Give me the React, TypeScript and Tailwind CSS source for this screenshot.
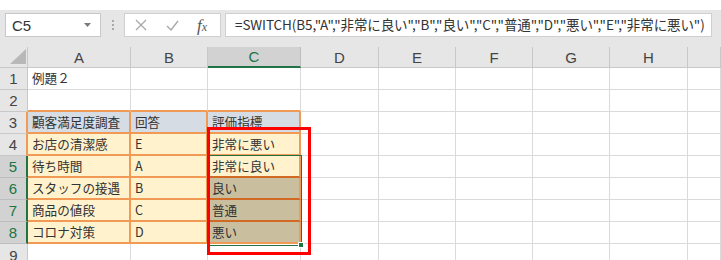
import React from "react";

const GRID = "grid grid-cols-[28px_103px_77px_93px_78px_77px_77px_77px_78px_1fr] grid-rows-[100%] overflow-hidden";

type Row = { n: number; cells: [string, string, string] };

const rows: Row[] = [
  { n: 1, cells: ["例題２", "", ""] },
  { n: 2, cells: ["", "", ""] },
  { n: 3, cells: ["顧客満足度調査", "回答", "評価指標"] },
  { n: 4, cells: ["お店の清潔感", "E", "非常に悪い"] },
  { n: 5, cells: ["待ち時間", "A", "非常に良い"] },
  { n: 6, cells: ["スタッフの接遇", "B", "良い"] },
  { n: 7, cells: ["商品の値段", "C", "普通"] },
  { n: 8, cells: ["コロナ対策", "D", "悪い"] },
];

const jp = { fontFamily: '"Noto Sans CJK JP", "Noto Sans", sans-serif' };
const lat = { fontFamily: '"Liberation Sans", Arial, sans-serif' };

function rowHeaderClass(n: number) {
  if (n === 3 || n === 4) return "bg-[#e6e6e6] text-[#444] border-r-2 border-r-[#f19a55] border-b border-b-[#c8c8c8]";
  if (n >= 5 && n <= 8) return "bg-[#d2d2d2] text-[#217346] border-r-2 border-r-[#217346] border-b border-b-[#bdbdbd]";
  return "bg-[#e6e6e6] text-[#444] border-r border-r-[#c8c8c8] border-b border-b-[#c8c8c8]";
}

function cellClass(n: number, c: number) {
  if (n === 2) return "bg-white border-r border-r-[#dadada] border-b-2 border-b-[#f19a55]";
  if (n === 3) return "bg-[#d6dce4] border-r-2 border-r-[#f19a55] border-b-2 border-b-[#f19a55]";
  if (n >= 4) {
    if (c === 2 && n >= 6) {
      if (n === 8) return "bg-[#c9bf9e] border-r-2 border-r-[#f19a55] border-b-2 border-b-[#f19a55]";
      return "bg-[#c9bf9e] border-r-2 border-r-[#f19a55] border-b-2 border-b-[#d06a24]";
    }
    if (c === 2 && n === 5) return "bg-[#fff2cc] border-r-2 border-r-[#f19a55] border-b-2 border-b-[#d06a24]";
    return "bg-[#fff2cc] border-r-2 border-r-[#f19a55] border-b-2 border-b-[#f19a55]";
  }
  return "bg-white border-r border-r-[#dadada] border-b border-b-[#dadada]";
}

const blank = "bg-white border-r border-r-[#dadada] border-b border-b-[#dadada]";

export default function App() {
  return (
    <div className="w-[721px] h-[260px] overflow-hidden bg-white relative select-none">
      <div className="h-[10px] bg-white" />
      <div className="h-[37px] bg-[#e6e6e6] flex items-start pt-[3px]">
        <div className="ml-[5px] w-[96px] h-[24px] bg-white border border-[#c8c8c8] flex items-center justify-between pl-[6px] pr-[9px]">
          <span className="text-[15px] leading-none text-[#333]" style={lat}>C5</span>
          <svg width="7" height="4" viewBox="0 0 7 4"><polygon points="0,0 7,0 3.5,4" fill="#7a7a7a" /></svg>
        </div>
        <div className="w-[23px] h-[24px] flex flex-col items-center justify-center gap-[2px]">
          <div className="w-[2px] h-[2px] bg-[#a8a8a8]" />
          <div className="w-[2px] h-[2px] bg-[#a8a8a8]" />
          <div className="w-[2px] h-[2px] bg-[#a8a8a8]" />
        </div>
        <div className="w-[97px] h-[24px] bg-white border border-[#d0d0d0] flex items-center">
          <svg className="ml-[10px]" width="12" height="12" viewBox="0 0 12 12">
            <path d="M1 1 L11 11 M11 1 L1 11" stroke="#a9a9a9" strokeWidth="1.3" fill="none" />
          </svg>
          <svg className="ml-[19px]" width="13" height="11" viewBox="0 0 13 11">
            <path d="M1 6 L5 10 L12 1" stroke="#a9a9a9" strokeWidth="1.4" fill="none" />
          </svg>
          <span className="ml-[18px] text-[17px] italic text-[#555] leading-none" style={{ fontFamily: '"Liberation Serif", serif' }}>
            f<span className="text-[12px]">x</span>
          </span>
        </div>
        <div className="ml-[4px] w-[487px] h-[24px] bg-white border border-[#d0d0d0] flex items-center pl-[9px]">
          <span className="text-[13.5px] leading-none text-[#333] whitespace-nowrap tracking-[-0.1px]" style={jp}>
            =SWITCH(B5,"A","非常に良い","B","良い","C","普通","D","悪い","E","非常に悪い")
          </span>
        </div>
      </div>

      <div className="relative">
        <div className={`${GRID} h-[21px]`}>
          <div className="bg-[#e6e6e6] border-r border-r-[#c8c8c8] border-b border-b-[#c8c8c8] relative">
            <svg className="absolute left-0 top-0" width="28" height="21" viewBox="0 0 28 21">
              <polygon points="26,2 26,17 10,17" fill="#b8b8b8" />
            </svg>
          </div>
          {["A", "B", "C", "D", "E", "F", "G", "H", ""].map((l, i) => (
            <div
              key={i}
              className={
                l === "C"
                  ? "bg-[#d2d2d2] border-r border-r-[#bdbdbd] border-b-2 border-b-[#217346] flex items-center justify-center text-[15px] leading-none text-[#217346]"
                  : "bg-[#e6e6e6] border-r border-r-[#c8c8c8] border-b border-b-[#c8c8c8] flex items-center justify-center text-[15px] leading-none text-[#444]"
              }
              style={lat}
            >
              {l}
            </div>
          ))}
        </div>

        {rows.map((r) => (
          <div key={r.n} className={`${GRID} h-[22px]`}>
            <div className={`${rowHeaderClass(r.n)} flex items-center justify-center text-[15px] leading-none`} style={lat}>
              {r.n}
            </div>
            {r.cells.map((t, c) => (
              <div
                key={c}
                className={`${cellClass(r.n, c)} flex items-center pl-[4px] text-[12.6px] leading-none text-[#333] whitespace-nowrap overflow-hidden`}
                style={jp}
              >
                {t}
              </div>
            ))}
            {[0, 1, 2, 3, 4, 5].map((k) => (
              <div key={k} className={blank} />
            ))}
          </div>
        ))}

        <div className={`${GRID} h-[22px]`}>
          <div className="bg-[#e6e6e6] border-r border-r-[#c8c8c8] flex items-center justify-center text-[15px] leading-none text-[#444]" style={lat}>
            9
          </div>
          {[0, 1, 2, 3, 4, 5, 6, 7, 8].map((k) => (
            <div key={k} className="bg-white border-r border-r-[#dadada]" />
          ))}
        </div>

        <div className="absolute left-[208px] top-[108px] w-[94px] h-[91px] border border-[#217346] pointer-events-none" />
        <div className="absolute left-[298px] top-[195px] w-[6px] h-[6px] bg-[#217346] border border-white pointer-events-none" />

        <div className="absolute left-[207px] top-[80px] w-[104px] h-[128px] border-[3px] border-[#ff0000] pointer-events-none" />
      </div>
    </div>
  );
}
